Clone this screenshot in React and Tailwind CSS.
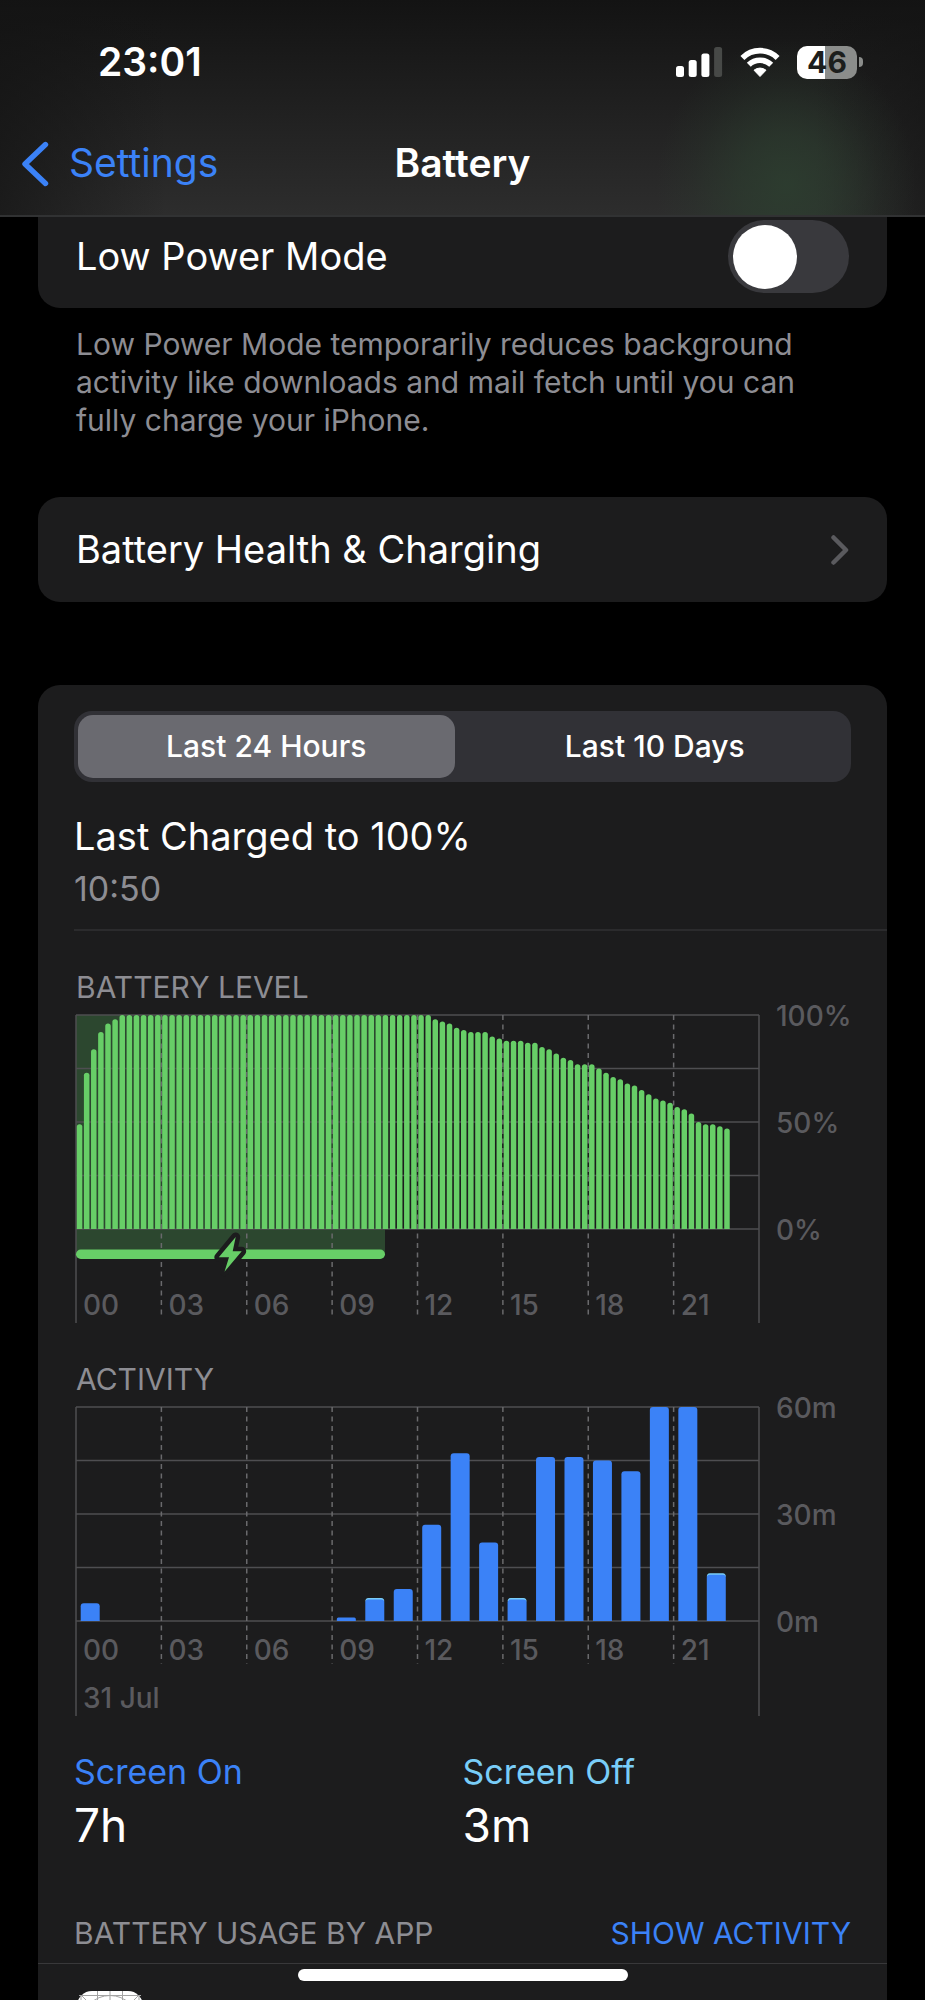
import { useState } from 'react';
import clsx from 'clsx';

// One entry per 15 minutes, starting at 00:00
const BATTERY_LEVELS = [
  49, 73, 84, 92, 96, 98,
  ...Array(44).fill(100),
  98, 97, 96, 94, 93, 92, 92, 92, 90, 89,
  88, 88, 88, 87, 87, 85, 84, 82, 80, 79, 77, 77,
  77, 75, 73, 71, 70, 68, 67, 65, 63, 61, 60, 59,
  57, 56, 54, 50, 49, 49, 48, 47,
];

// Minutes of use per hour
const ACTIVITY = [
  { hour: 0, on: 5 },
  { hour: 9, on: 1 },
  { hour: 10, on: 6, off: true },
  { hour: 11, on: 9 },
  { hour: 12, on: 27 },
  { hour: 13, on: 47 },
  { hour: 14, on: 22 },
  { hour: 15, on: 6, off: true },
  { hour: 16, on: 46 },
  { hour: 17, on: 46 },
  { hour: 18, on: 45 },
  { hour: 19, on: 42 },
  { hour: 20, on: 60 },
  { hour: 21, on: 60 },
  { hour: 22, on: 13, off: true },
];

const HOURS = ['00', '03', '06', '09', '12', '15', '18', '21'];
const RANGES = ['Last 24 Hours', 'Last 10 Days'];

// Plot area shared by both charts
const LEFT = 2;
const TOP = 9;
const WIDTH = 683;
const HEIGHT = 214;
const BOTTOM = TOP + HEIGHT;

const StatusBar = () => (
  <div className="flex h-12 items-center justify-between pl-[98px] pr-[62px]">
    <time className="text-[39px] font-semibold">23:01</time>
    <div className="flex items-center gap-[17px]">
      <svg width="47" height="30" viewBox="0 0 47 30" fill="#fff" role="img" aria-label="Signal">
        <rect x="0" y="19" width="8" height="11" rx="2.5" />
        <rect x="12.7" y="13" width="8" height="17" rx="2.5" />
        <rect x="25.4" y="6.5" width="8" height="23.5" rx="2.5" />
        <rect x="38.1" y="0" width="8" height="30" rx="2.5" fill="#474947" />
      </svg>
      <svg width="40" height="30" viewBox="0 0 40 30" fill="none" stroke="#fff" role="img" aria-label="Wi-Fi">
        <path d="M2.4 10.9A25 25 0 0 1 37.6 10.9" strokeWidth="5.6" />
        <path d="M8.8 17.8A16 16 0 0 1 31.2 17.8" strokeWidth="5.6" />
        <path d="M20 29.5L14 23.2A9.5 9.5 0 0 1 26 23.2Z" fill="#fff" strokeWidth="1" strokeLinejoin="round" />
      </svg>
      <div className="flex items-center gap-0.5">
        <div className="flex h-[33px] w-[60px] items-center justify-center rounded-[10px] bg-[linear-gradient(90deg,#fff_47%,#8b8d8b_47%)] text-[30px] font-bold text-[#1c1e1c]">
          46
        </div>
        <div className="h-2.5 w-1 rounded-r-full bg-[#8b8d8b]" />
      </div>
    </div>
  </div>
);

const Header = () => (
  <header className="relative z-10 border-b-2 border-[#313233] bg-[radial-gradient(ellipse_130px_145px_at_85%_86%,rgba(45,63,48,0.85),rgba(45,63,48,0.6)_35%,rgba(45,63,48,0.2)_72%,transparent),linear-gradient(90deg,rgba(20,20,20,0.7),transparent_18%,transparent_88%,rgba(20,20,20,0.6)),linear-gradient(180deg,#131313,#2d2d2d)] pt-[38px]">
    <StatusBar />
    <nav className="mt-[26px] grid h-[103px] grid-cols-3 items-center text-[39px]">
      <a href="#settings" className="flex items-center gap-5 pl-[22px] text-[#3b82f7]">
        <svg width="27" height="46" viewBox="0 0 27 46" fill="none" stroke="currentColor" strokeWidth="5.4" strokeLinecap="round" strokeLinejoin="round">
          <path d="M23.5 3.5L3 23L23.5 42.5" />
        </svg>
        Settings
      </a>
      <h1 className="text-center font-semibold">Battery</h1>
    </nav>
  </header>
);

const ChartFrame = ({ sideEnd, dashEnd, labelY, yLabels }) => (
  <>
    <g stroke="#4e4e51" strokeWidth="1.5">
      {[0, 1, 2, 3, 4].map((n) => (
        <line key={n} x1={LEFT} x2={LEFT + WIDTH} y1={TOP + (n * HEIGHT) / 4} y2={TOP + (n * HEIGHT) / 4} />
      ))}
      <line x1={LEFT} x2={LEFT} y1={TOP} y2={sideEnd} />
      <line x1={LEFT + WIDTH} x2={LEFT + WIDTH} y1={TOP} y2={sideEnd} />
    </g>
    <g fill="#5a5a5e" fontSize="28" fontWeight="500">
      {HOURS.map((h, i) => (
        <text key={h} x={LEFT + 7 + (i * WIDTH) / 8} y={labelY}>{h}</text>
      ))}
      {yLabels.map((label, i) => (
        <text key={label} x="702" y={TOP + 11 + (i * HEIGHT) / 2}>{label}</text>
      ))}
    </g>
    <g stroke="#69696c" strokeWidth="1.5" strokeDasharray="5 4.5">
      {HOURS.slice(1).map((h, i) => {
        const x = LEFT + ((i + 1) * WIDTH) / 8;
        return <line key={h} x1={x} x2={x} y1={TOP} y2={dashEnd} />;
      })}
    </g>
  </>
);

const BatteryLevelChart = () => {
  const step = WIDTH / 96;
  return (
    <svg viewBox="0 0 777 317" className="block h-auto w-full overflow-visible" role="img" aria-label="Battery level">
      {/* Charging period */}
      <rect x={LEFT} y={TOP} width="309" height="240" fill="#2c472f" />
      <ChartFrame sideEnd={317} dashEnd={313} labelY={309} yLabels={['100%', '50%', '0%']} />
      <g fill="#67ce67">
        {BATTERY_LEVELS.map((level, i) => {
          const x = LEFT + i * step + 0.8;
          const y = BOTTOM - (level * HEIGHT) / 100;
          return (
            <path key={i} d={`M${x} ${BOTTOM}V${y + 2.5}q0 -2.5 2.75 -2.5t2.75 2.5V${BOTTOM}Z`} />
          );
        })}
        <rect x={LEFT} y="243.5" width="309" height="9.5" rx="4.75" />
      </g>
      <path
        d="M161.7 231L158.7 245.3H167.7L150.5 265.7L155 251.3H144.8Z"
        fill="#67ce67"
        stroke="#1c1c1d"
        strokeWidth="9"
        strokeLinejoin="round"
        paintOrder="stroke"
      />
    </svg>
  );
};

const ActivityChart = () => {
  const step = WIDTH / 24;
  return (
    <svg viewBox="0 0 777 318" className="block h-auto w-full overflow-visible" role="img" aria-label="Activity">
      <ChartFrame sideEnd={318} dashEnd={266} labelY={262} yLabels={['60m', '30m', '0m']} />
      <text x={LEFT + 7} y="310" fill="#5a5a5e" fontSize="28" fontWeight="500">31 Jul</text>
      {ACTIVITY.map(({ hour, on, off }) => {
        const x = LEFT + hour * step + 4.7;
        const y = BOTTOM - (on * HEIGHT) / 60;
        const r = on > 1 ? 3 : 1.5;
        return (
          <g key={hour}>
            {off && <path d={`M${x} ${y + 2}q0 -3.5 3 -3.5h13q3 0 3 3.5Z`} fill="#79cdf8" />}
            <path d={`M${x} ${BOTTOM}V${y + r}q0 -${r} ${r} -${r}h${19 - r * 2}q${r} 0 ${r} ${r}V${BOTTOM}Z`} fill="#3b82f7" />
          </g>
        );
      })}
    </svg>
  );
};

const AppIcon = () => (
  <svg width="66" height="66" viewBox="0 0 66 66" fill="none" stroke="#a3a3a3" strokeWidth="1">
    <rect width="66" height="66" rx="15" fill="#fff" stroke="none" />
    <path d="M20.5 0V66M33 0V66M45.5 0V66M4 4V62M62 4V62M2 4.5H64M0 20.5H66M0 33H66M0 45.5H66M2 61.5H64M4 4L62 62M62 4L4 62" />
    <circle cx="33" cy="33" r="28.5" />
    <circle cx="33" cy="33" r="17" />
  </svg>
);

export default function App() {
  const [lowPower, setLowPower] = useState(false);
  const [range, setRange] = useState(RANGES[0]);

  return (
    <div className="relative flex h-screen flex-col overflow-hidden bg-black font-['Inter',sans-serif] text-white">
      <Header />

      <main className="flex min-h-0 flex-1 flex-col px-[38px]">
        {/* Low Power Mode, scrolled partly under the header */}
        <section className="-mt-3 shrink-0">
          <div className="flex h-[103px] items-center justify-between rounded-b-[22px] bg-[#1c1c1d] px-[38px]">
            <label htmlFor="low-power" className="text-[38px]">Low Power Mode</label>
            <input
              id="low-power"
              type="checkbox"
              role="switch"
              checked={lowPower}
              onChange={(e) => setLowPower(e.target.checked)}
              className="flex h-[73px] w-[121px] appearance-none items-center rounded-full bg-[#39393d] px-[5px] before:size-16 before:rounded-full before:bg-white before:content-[''] checked:justify-end checked:bg-[#67ce67]"
            />
          </div>
          <p className="mt-[17px] px-[38px] text-[30px] leading-[38px] text-[#8d8d93]">
            Low Power Mode temporarily reduces background activity like downloads and mail fetch until you can fully charge your iPhone.
          </p>
        </section>

        <a
          href="#battery-health"
          className="mt-[58px] flex h-[105px] shrink-0 items-center justify-between rounded-[22px] bg-[#1c1c1d] px-[38px] text-[38px]"
        >
          Battery Health &amp; Charging
          <svg width="18" height="30" viewBox="0 0 18 30" fill="none" stroke="#5a5a5e" strokeWidth="4.5" strokeLinecap="round" strokeLinejoin="round">
            <path d="M2.5 2.5L15 15L2.5 27.5" />
          </svg>
        </a>

        <section className="mt-[83px] flex-1 rounded-t-[22px] bg-[#1c1c1d] px-9 pt-[26px]">
          <div className="grid h-[71px] grid-cols-2 rounded-[18px] bg-[#313136] p-1">
            {RANGES.map((r) => (
              <button
                key={r}
                onClick={() => setRange(r)}
                className={clsx('rounded-[15px] text-[30px] font-medium', r === range && 'mr-2 bg-[#6a6a70]')}
              >
                {r}
              </button>
            ))}
          </div>

          <h2 className="mt-[30px] text-[38px] leading-[48px]">Last Charged to 100%</h2>
          <p className="mt-2 text-[34px] leading-[42px] text-[#8d8d93]">10:50</p>
          <hr className="-mr-9 mt-[19px] border-t-2 border-[#2b2b2d]" />

          <h3 className="mt-[37px] pl-0.5 text-[30px] leading-[38px] text-[#8d8d93]">BATTERY LEVEL</h3>
          <BatteryLevelChart />

          <h3 className="mt-[37px] pl-0.5 text-[30px] leading-[38px] text-[#8d8d93]">ACTIVITY</h3>
          <ActivityChart />

          <dl className="mt-[35px] grid grid-cols-2">
            <div>
              <dt className="text-[34px] leading-[42px] text-[#3b82f7]">Screen On</dt>
              <dd className="mt-1 text-[46px] leading-[56px]">7h</dd>
            </div>
            <div>
              <dt className="text-[34px] leading-[42px] text-[#79cdf8]">Screen Off</dt>
              <dd className="mt-1 text-[46px] leading-[56px]">3m</dd>
            </div>
          </dl>

          <div className="mt-[61px] flex items-center justify-between text-[30px] leading-[38px]">
            <h3 className="text-[#8d8d93]">BATTERY USAGE BY APP</h3>
            <button className="text-[#3b82f7]">SHOW ACTIVITY</button>
          </div>
          <hr className="-mx-9 mt-[11px] border-[#38383a]" />
          <div className="mt-[27px] pl-[3px]">
            <AppIcon />
          </div>
        </section>
      </main>

      {/* Home indicator */}
      <div className="absolute inset-x-0 bottom-[19px] mx-auto h-3 w-[330px] rounded-full bg-white" />
    </div>
  );
}
